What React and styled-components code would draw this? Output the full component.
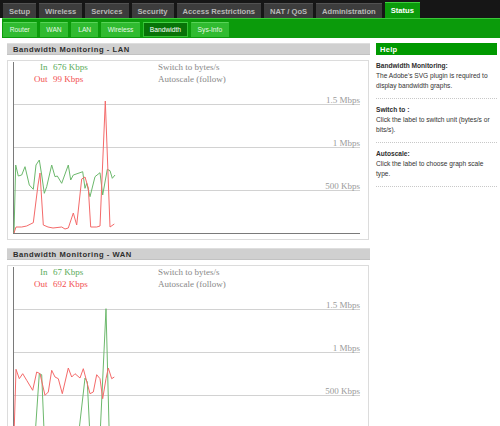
import React from 'react';
import styled, { createGlobalStyle } from 'styled-components';

const GlobalStyle = createGlobalStyle`
  html, body {
    margin: 0;
    padding: 0;
    background: #ffffff;
    overflow: hidden;
  }
  body {
    font-family: "Liberation Sans", Arial, sans-serif;
  }
`;

const Page = styled.div`
  width: 500px;
  height: 426px;
  background: #ffffff;
  overflow: hidden;
`;

const TopBar = styled.div`
  height: 18px;
  background: #161616;
  display: flex;
  align-items: flex-end;
  gap: 3px;
  padding-left: 3px;
`;

const Tab = styled.div`
  height: ${props => (props.active ? '16px' : '15px')};
  box-sizing: border-box;
  padding: 0 6px;
  display: flex;
  align-items: center;
  font-size: 7.6px;
  font-weight: bold;
  color: ${props => (props.active ? '#ffffff' : '#b8b8b8')};
  background: ${props => (props.active ? '#0b9b0b' : '#3d3d3d')};
  border-top: 1px solid ${props => (props.active ? '#3fcf3f' : '#525252')};
  white-space: nowrap;
`;

const GreenBar = styled.div`
  height: 20px;
  box-sizing: border-box;
  margin-left: 2px;
  background: #0b9b0b;
  border-top: 1px solid #38c838;
  display: flex;
  align-items: flex-start;
  gap: 3px;
  padding: 3px 0 0 1px;
`;

const SubTab = styled.div`
  height: 15px;
  box-sizing: border-box;
  padding: 0 5.75px;
  display: flex;
  align-items: center;
  font-size: 6.7px;
  color: ${props => (props.active ? '#ffffff' : '#e6f6e6')};
  background: ${props => (props.active ? '#087308' : '#30bb30')};
  border: 1px solid ${props => (props.active ? '#35c035' : '#30bb30')};
  border-top-color: ${props => (props.active ? '#45d045' : '#58d458')};
  white-space: nowrap;
`;

const Content = styled.div`
  display: flex;
  gap: 6px;
  padding: 5px 3px 0 7px;
`;

const LeftCol = styled.div`
  width: 363px;
  flex: none;
`;

const Section = styled.div`
  margin-bottom: 8px;
`;

const SectionHeader = styled.div`
  height: 12px;
  box-sizing: border-box;
  padding-left: 6px;
  background: #d0d0d0;
  border-top: 1px solid #dedede;
  border-bottom: 1px solid #c2c2c2;
  display: flex;
  align-items: center;
  font-size: 7.6px;
  font-weight: bold;
  letter-spacing: 0.55px;
  color: #2e2e2e;
`;

const GraphBox = styled.div`
  margin-top: 5px;
  width: 362px;
  height: 180px;
  box-sizing: border-box;
  border: 1px solid #dcdcdc;
  overflow: hidden;
`;

const Graph = styled.svg`
  display: block;
  font-family: "Liberation Serif", "Times New Roman", serif;
  font-size: 9px;
`;

const HelpCol = styled.div`
  flex: 1;
  font-size: 6.6px;
  color: #333333;
`;

const HelpHeader = styled.div`
  height: 12px;
  box-sizing: border-box;
  padding-left: 4px;
  background: #009900;
  display: flex;
  align-items: center;
  font-size: 7.5px;
  font-weight: bold;
  letter-spacing: 0.3px;
  color: #ffffff;
`;

const HelpItem = styled.div`
  padding: 5px 0 7px;
  border-bottom: 1px dotted #c8c8c8;
  &:first-of-type {
    padding-top: 2px;
  }
`;

const HelpTitle = styled.div`
  font-weight: bold;
  line-height: 11px;
  color: #2e2e2e;
`;

const HelpText = styled.div`
  line-height: 10px;
  white-space: nowrap;
`;

const topTabs = [
  'Setup',
  'Wireless',
  'Services',
  'Security',
  'Access Restrictions',
  'NAT / QoS',
  'Administration',
  'Status'
];

const subTabs = ['Router', 'WAN', 'LAN', 'Wireless', 'Bandwidth', 'Sys-Info'];

const grid = [
  { y: 43.5, label: '1.5 Mbps' },
  { y: 86.5, label: '1 Mbps' },
  { y: 129.5, label: '500 Kbps' }
];

const lan = {
  title: 'Bandwidth Monitoring - LAN',
  inVal: '676 Kbps',
  outVal: '99 Kbps',
  inPts: [
    [6, 172], [7.7, 104], [10.3, 115], [13.7, 114], [17, 105.7], [21.3, 124],
    [25.3, 128.3], [28, 104], [31.3, 99], [33.7, 114], [36.3, 132.3], [38.7, 125.7],
    [43.7, 104], [47, 115.7], [49.3, 115], [53.7, 122.3], [60.3, 104], [62.7, 119],
    [65.3, 114], [72, 111.7], [74.7, 110.7], [77, 127.3], [78.7, 122.3], [82, 135.7],
    [87, 115.7], [92, 111.7], [94.7, 134], [99.3, 108.3], [102, 109.7], [104.3, 117.3],
    [107, 114]
  ],
  outPts: [
    [6, 172], [8, 166], [13.7, 166], [18.7, 165], [25.3, 161.7], [30, 124], [32, 112],
    [35.3, 164], [40, 166], [45, 167], [53.7, 166], [57, 168], [60.3, 167], [65.3, 152],
    [68.7, 164], [73.7, 118], [77, 116], [80.3, 127], [82.7, 166], [88.7, 166], [92, 165],
    [97.3, 40], [102, 166], [106.3, 163]
  ]
};

const wan = {
  title: 'Bandwidth Monitoring - WAN',
  inVal: '67 Kbps',
  outVal: '692 Kbps',
  inPts: [
    [6, 171], [27, 171], [31.3, 107.7], [33.7, 108.7], [36.3, 171], [70.3, 171],
    [77, 112], [79.3, 116], [82, 171], [92, 171], [98, 42.7], [101.3, 171], [106.3, 171]
  ],
  outPts: [
    [6, 171], [8, 103.3], [11.3, 112.7], [14.7, 107.7], [18.7, 114.3], [24.7, 124.3],
    [28.7, 106], [32, 107.7], [37, 129.3], [40.3, 126], [43.7, 104.3], [47, 111],
    [50.3, 112.7], [54.3, 127.7], [60.3, 102], [63.7, 111], [67, 107.7], [72, 112],
    [75.3, 102.7], [79.3, 117.7], [82, 127.7], [85.3, 126], [88.7, 108.7], [92, 112.7],
    [94.7, 132.7], [98, 112.7], [100.3, 102], [103.7, 112.7], [106.3, 111]
  ]
};

const toPoints = pts => pts.map(p => p.join(',')).join(' ');

const Monitor = ({ data }) => (
  <Section>
    <SectionHeader>{data.title}</SectionHeader>
    <GraphBox>
      <Graph width="360" height="178" viewBox="0 0 360 178">
        {grid.map(g => (
          <g key={g.label}>
            <line x1="6" y1={g.y} x2="352" y2={g.y} stroke="#d2d2d2" strokeWidth="1" />
            <text x="352" y={g.y - 2} textAnchor="end" fill="#9a9a9a">{g.label}</text>
          </g>
        ))}
        <line x1="5.5" y1="1" x2="5.5" y2="173" stroke="#7a7a7a" strokeWidth="1" />
        <line x1="5" y1="172.5" x2="352" y2="172.5" stroke="#7a7a7a" strokeWidth="1" />

        <text x="39.5" y="9" textAnchor="end" fill="#5aac5a">In</text>
        <text x="45" y="9" fill="#5aac5a">{data.inVal}</text>
        <text x="39.5" y="21" textAnchor="end" fill="#f25050">Out</text>
        <text x="45" y="21" fill="#f25050">{data.outVal}</text>
        <text x="150" y="9" fill="#888888">Switch to bytes/s</text>
        <text x="150" y="21" fill="#888888">Autoscale (follow)</text>

        <polyline points={toPoints(data.inPts)} fill="none" stroke="#6cb86c" strokeWidth="1" />
        <polyline points={toPoints(data.outPts)} fill="none" stroke="#f46a6a" strokeWidth="1" />
      </Graph>
    </GraphBox>
  </Section>
);

export default function App() {
  return (
    <Page>
      <GlobalStyle />
      <TopBar>
        {topTabs.map(t => (
          <Tab key={t} active={t === 'Status'}>{t}</Tab>
        ))}
      </TopBar>
      <GreenBar>
        {subTabs.map(t => (
          <SubTab key={t} active={t === 'Bandwidth'}>{t}</SubTab>
        ))}
      </GreenBar>
      <Content>
        <LeftCol>
          <Monitor data={lan} />
          <Monitor data={wan} />
        </LeftCol>
        <HelpCol>
          <HelpHeader>Help</HelpHeader>
          <HelpItem>
            <HelpTitle>Bandwidth Monitoring:</HelpTitle>
            <HelpText>The Adobe's SVG plugin is required to</HelpText>
            <HelpText>display bandwidth graphs.</HelpText>
          </HelpItem>
          <HelpItem>
            <HelpTitle>Switch to :</HelpTitle>
            <HelpText>Click the label to switch unit (bytes/s or</HelpText>
            <HelpText>bits/s).</HelpText>
          </HelpItem>
          <HelpItem>
            <HelpTitle>Autoscale:</HelpTitle>
            <HelpText>Click the label to choose graph scale</HelpText>
            <HelpText>type.</HelpText>
          </HelpItem>
        </HelpCol>
      </Content>
    </Page>
  );
}
